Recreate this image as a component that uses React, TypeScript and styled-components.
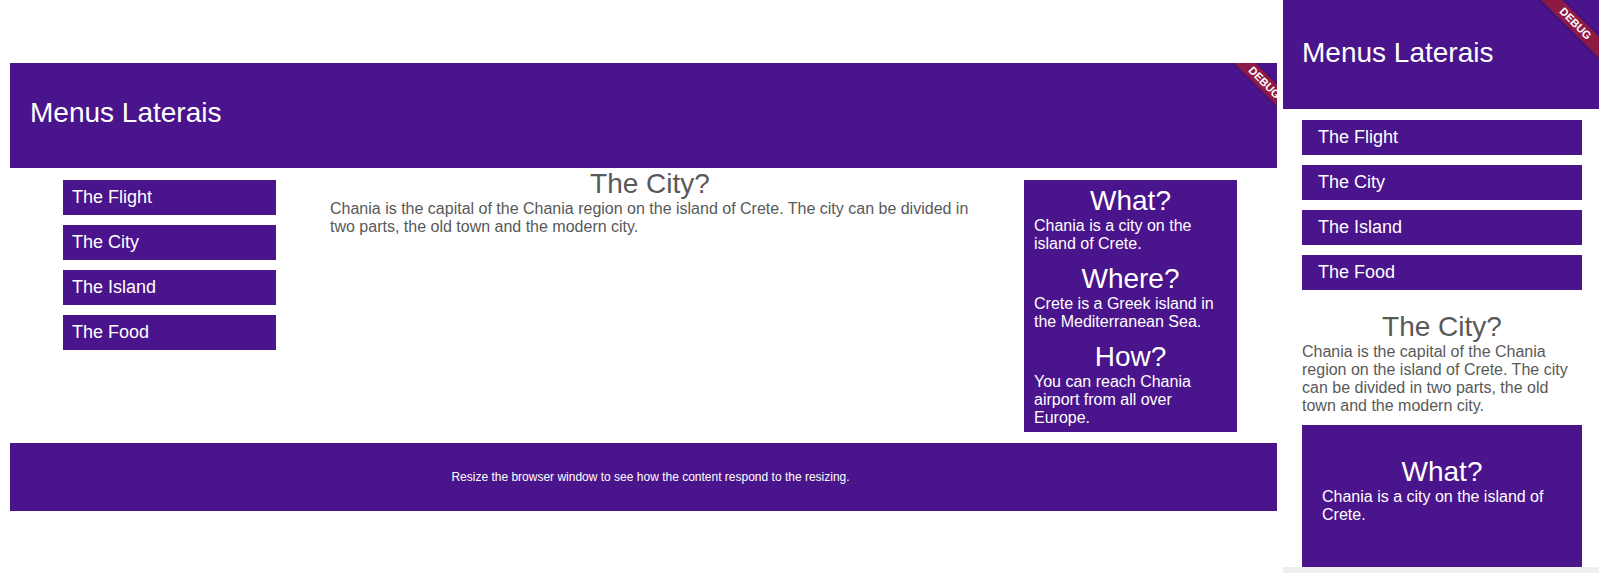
import React from "react";
import styled, { createGlobalStyle } from "styled-components";

type Layout = "wide" | "narrow";

const PURPLE = "#4a148c";

const menuItems = ["The Flight", "The City", "The Island", "The Food"];

const facts = [
  { title: "What?", text: "Chania is a city on the island of Crete." },
  { title: "Where?", text: "Crete is a Greek island in the Mediterranean Sea." },
  { title: "How?", text: "You can reach Chania airport from all over Europe." },
];

const cityText =
  "Chania is the capital of the Chania region on the island of Crete. The city can be divided in two parts, the old town and the modern city.";

const App = () => {
  return (
    <>
      <GlobalStyle />
      <Page>
        <WideFrame>
          <Header $layout="wide">
            <Title>Menus Laterais</Title>
          </Header>
          <Content>
            <Menu $layout="wide">
              {menuItems.map((item) => (
                <MenuItem key={item} $layout="wide">
                  {item}
                </MenuItem>
              ))}
            </Menu>
            <Main $layout="wide">
              <Heading>The City?</Heading>
              <Paragraph>{cityText}</Paragraph>
            </Main>
            <Aside $layout="wide">
              {facts.map((fact) => (
                <Fact key={fact.title} $layout="wide">
                  <FactTitle>{fact.title}</FactTitle>
                  <FactText>{fact.text}</FactText>
                </Fact>
              ))}
            </Aside>
          </Content>
          <Footer>
            Resize the browser window to see how the content respond to the
            resizing.
          </Footer>
          <DebugBanner $top={22} $right={-61}>
            DEBUG
          </DebugBanner>
        </WideFrame>

        <NarrowColumn>
          <NarrowFrame>
            <Header $layout="narrow">
              <Title>Menus Laterais</Title>
            </Header>
            <NarrowBody>
              <Menu $layout="narrow">
                {menuItems.map((item) => (
                  <MenuItem key={item} $layout="narrow">
                    {item}
                  </MenuItem>
                ))}
              </Menu>
              <Main $layout="narrow">
                <Heading>The City?</Heading>
                <Paragraph>{cityText}</Paragraph>
              </Main>
              <Aside $layout="narrow">
                {facts.map((fact) => (
                  <Fact key={fact.title} $layout="narrow">
                    <FactTitle>{fact.title}</FactTitle>
                    <FactText>{fact.text}</FactText>
                  </Fact>
                ))}
              </Aside>
            </NarrowBody>
            <DebugBanner $top={26} $right={-50}>
              DEBUG
            </DebugBanner>
          </NarrowFrame>
          <BottomEdge />
        </NarrowColumn>
      </Page>
    </>
  );
};

export default App;

const GlobalStyle = createGlobalStyle`
  html, body {
    margin: 0;
    padding: 0;
    background: #ffffff;
    overflow: hidden;
  }
  body {
    font-family: "Liberation Sans", Arial, sans-serif;
  }
`;

const Page = styled.div`
  display: flex;
  align-items: flex-start;
  width: 1599px;
  height: 573px;
`;

const WideFrame = styled.div`
  position: relative;
  overflow: hidden;
  width: 1267px;
  margin: 63px 0 0 10px;
`;

const NarrowColumn = styled.div`
  display: flex;
  flex-direction: column;
  width: 316px;
  margin-left: 6px;
`;

const NarrowFrame = styled.div`
  position: relative;
  overflow: hidden;
  height: 567px;
`;

const BottomEdge = styled.div`
  height: 6px;
  background: #efefef;
`;

const Header = styled.header<{ $layout: Layout }>`
  box-sizing: border-box;
  background: ${PURPLE};
  color: #ffffff;
  height: ${(p) => (p.$layout === "wide" ? "105px" : "109px")};
  padding: ${(p) => (p.$layout === "wide" ? "34px 20px 0" : "37px 19px 0")};
`;

const Title = styled.h1`
  margin: 0;
  font-size: 28px;
  font-weight: 400;
  line-height: normal;
`;

const Content = styled.div`
  display: grid;
  grid-template-columns: 213px 1fr 213px;
  column-gap: 54px;
  align-items: start;
  padding: 0 40px 11px 53px;
`;

const NarrowBody = styled.div`
  display: flex;
  flex-direction: column;
  padding: 11px 17px 0 19px;
`;

const Menu = styled.nav<{ $layout: Layout }>`
  display: flex;
  flex-direction: column;
  gap: 10px;
  margin-top: ${(p) => (p.$layout === "wide" ? "12px" : "0")};
`;

const MenuItem = styled.div<{ $layout: Layout }>`
  display: flex;
  align-items: center;
  height: 35px;
  padding-left: ${(p) => (p.$layout === "wide" ? "9px" : "16px")};
  background: ${PURPLE};
  color: #ffffff;
  font-size: 18px;
`;

const Main = styled.main<{ $layout: Layout }>`
  color: #595959;
  margin-top: ${(p) => (p.$layout === "wide" ? "0" : "21px")};
`;

const Heading = styled.h2`
  margin: 0;
  font-size: 28px;
  font-weight: 400;
  line-height: normal;
  text-align: center;
`;

const Paragraph = styled.p`
  margin: 0;
  font-size: 16px;
  line-height: normal;
`;

const Aside = styled.aside<{ $layout: Layout }>`
  display: flex;
  flex-direction: column;
  gap: ${(p) => (p.$layout === "wide" ? "10px" : "0")};
  background: ${PURPLE};
  color: #ffffff;
  margin-top: ${(p) => (p.$layout === "wide" ? "12px" : "10px")};
  padding: ${(p) => (p.$layout === "wide" ? "5px 10px 5px" : "0")};
`;

const Fact = styled.section<{ $layout: Layout }>`
  padding: ${(p) => (p.$layout === "wide" ? "0" : "31px 20px")};
`;

const FactTitle = styled.h3`
  margin: 0;
  font-size: 28px;
  font-weight: 400;
  line-height: normal;
  text-align: center;
`;

const FactText = styled.p`
  margin: 0;
  font-size: 16px;
  line-height: normal;
`;

const Footer = styled.footer`
  display: flex;
  align-items: center;
  justify-content: center;
  height: 68px;
  padding-left: 14px;
  background: ${PURPLE};
  color: #ffffff;
  font-size: 12px;
`;

const DebugBanner = styled.div<{ $top: number; $right: number }>`
  position: absolute;
  top: ${(p) => p.$top}px;
  right: ${(p) => p.$right}px;
  width: 100px;
  height: 15px;
  background: rgba(183, 28, 28, 0.63);
  box-shadow: 0 0 4px rgba(0, 0, 0, 0.3);
  transform-origin: 50px -26px;
  transform: rotate(45deg);
  color: #ffffff;
  font-size: 11px;
  font-weight: 700;
  line-height: 15px;
  text-align: center;
`;
